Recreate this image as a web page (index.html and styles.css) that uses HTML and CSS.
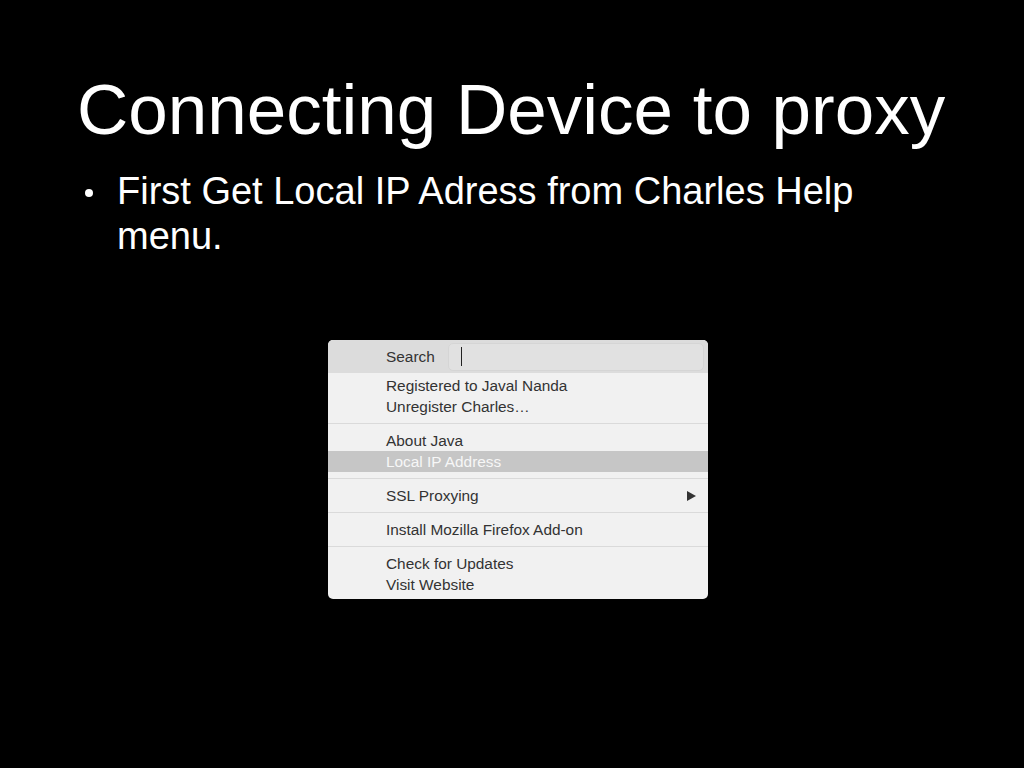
FILE: index.html
```html
<!DOCTYPE html>
<html lang="en">
<head>
<meta charset="UTF-8" />
<title>Connecting Device to proxy</title>
<link rel="stylesheet" href="styles.css">
</head>
<body>

<div class="slide">
  <h1>Connecting Device to proxy</h1>
  <div class="point">
    <span class="dot"></span>
    <p>First Get Local IP Adress from Charles Help menu.</p>
  </div>

  <div class="menu">
    <div class="search">
      <span class="search-label">Search</span>
      <div class="search-field"><span class="caret"></span></div>
    </div>
    <div class="item">Registered to Javal Nanda</div>
    <div class="item">Unregister Charles…</div>
    <div class="sep"></div>
    <div class="item">About Java</div>
    <div class="item active">Local IP Address</div>
    <div class="sep"></div>
    <div class="item sub">SSL Proxying <span class="arrow"></span></div>
    <div class="sep"></div>
    <div class="item">Install Mozilla Firefox Add-on</div>
    <div class="sep"></div>
    <div class="item">Check for Updates</div>
    <div class="item">Visit Website</div>
  </div>
</div>

</body>
</html>
```

FILE: styles.css
```css
body {
  margin: 0;
  background: #000;
  color: #fff;
  font-family: "Liberation Sans", Arial, sans-serif;
}
.slide {
  width: 1024px;
  height: 768px;
  padding-left: 77px;
  box-sizing: border-box;
  overflow: hidden;
}
h1 {
  margin: 70px 0 0 0;
  font-size: 71px;
  line-height: 80px;
  font-weight: normal;
}
.point {
  display: flex;
  align-items: flex-start;
  margin-top: 19px;
}
.dot {
  flex: none;
  width: 8px;
  height: 8px;
  border-radius: 50%;
  background: #fff;
  margin: 20px 24px 0 8px;
}
.point p {
  margin: 0;
  width: 760px;
  font-size: 38px;
  line-height: 45px;
}

/* Charles help menu */
.menu {
  margin: 81px 0 0 251px;
  width: 380px;
  padding-bottom: 4px;
  background: #f1f1f1;
  border-radius: 5px;
  overflow: hidden;
  color: #333;
  font-size: 15.4px;
}
.search {
  display: flex;
  align-items: center;
  height: 33px;
  padding-left: 58px;
  margin-bottom: 2px;
  background: #dcdcdc;
}
.search-label {
  width: 62px;
}
.search-field {
  flex: 1;
  height: 26px;
  margin-right: 4px;
  background: #e1e1e1;
  border: 1px solid #d5d5d5;
  border-radius: 5px;
  display: flex;
  align-items: center;
}
.caret {
  width: 1px;
  height: 19px;
  margin-left: 12px;
  background: #222;
}
.item {
  display: flex;
  align-items: center;
  height: 21px;
  padding: 0 12px 0 58px;
}
.item.active {
  background: #c6c6c6;
  color: #f7f7f7;
}
.item.sub {
  justify-content: space-between;
}
.arrow {
  width: 0;
  height: 0;
  border-top: 5px solid transparent;
  border-bottom: 5px solid transparent;
  border-left: 9px solid #333;
}
.sep {
  height: 13px;
  display: flex;
  align-items: center;
}
.sep::after {
  content: "";
  flex: 1;
  height: 1px;
  background: #dadada;
}
```
